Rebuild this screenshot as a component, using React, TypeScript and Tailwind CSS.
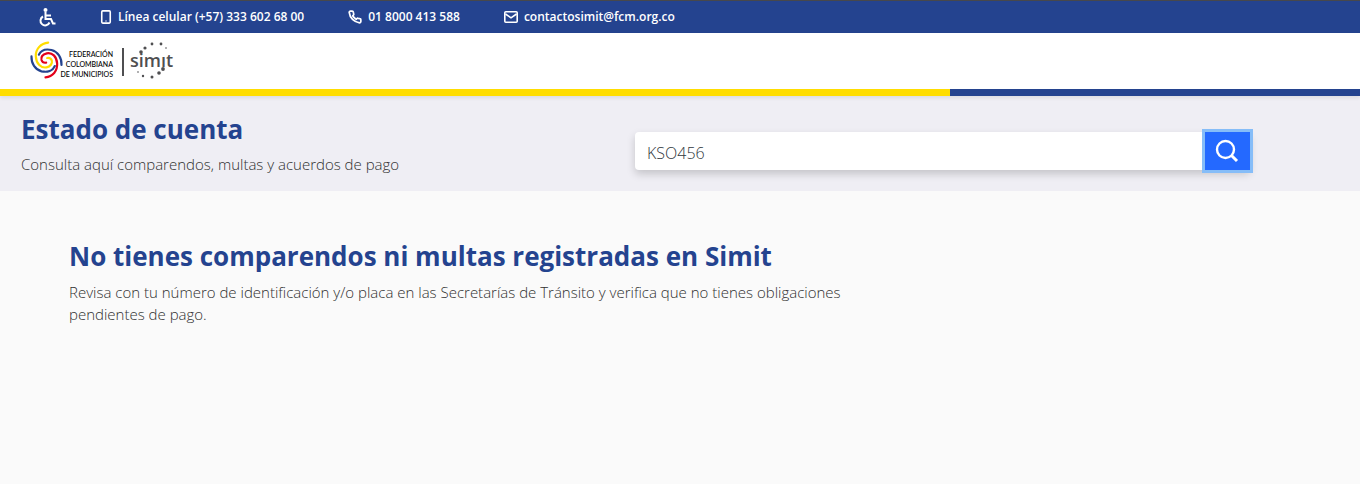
import { useState } from "react";

function FederationSwirl() {
  return (
    <svg viewBox="0 0 98 114" className="h-[38px] w-[33px] shrink-0" fill="none" strokeWidth="6.5" strokeLinecap="round" aria-hidden="true">
      <path stroke="#24438f" d="M4 46c-1 22 11 40 30 45 18 4 34-2 40-16" />
      <path stroke="#24438f" d="M94 72c1-22-11-40-30-45-18-4-32 2-38 14" />
      <path stroke="#ffdd00" d="M54 5C32 7 16 24 17 46c1 22 16 36 32 33 12-2 18-12 16-20-2-6-8-9-14-8" />
      <path stroke="#e2001a" d="M46 109C68 107 82 90 81 68 80 46 66 34 50 37 38 40 32 48 34 57c2 6 8 9 14 8" />
    </svg>
  );
}

function SimitLogo() {
  return (
    <svg viewBox="0 0 44 40" className="h-10 w-11 shrink-0" fill="#4f4f51" role="img" aria-label="simit">
      <text x="0" y="27" fontSize="18" fontWeight="600" fontFamily="'Open Sans', sans-serif">simıt</text>
      <circle cx="11" cy="12" r="1.8" />
      <circle cx="15" cy="8" r="1.6" />
      <circle cx="22" cy="4" r="1.4" />
      <circle cx="31" cy="4" r="1.4" />
      <circle cx="36" cy="8" r="0.8" />
      <circle cx="33" cy="29" r="1.9" />
      <circle cx="29" cy="33" r="1.8" />
      <circle cx="22" cy="37" r="1.5" />
      <circle cx="13" cy="36" r="1.2" />
      <circle cx="8" cy="32" r="0.8" />
    </svg>
  );
}

function AccessibilityIcon() {
  return (
    <svg viewBox="0 0 18 20" className="h-5 w-[18px]" fill="none" stroke="#fff" strokeWidth="2" aria-hidden="true">
      <circle cx="7.5" cy="3" r="2" fill="#fff" stroke="none" />
      <path d="M7.5 5v7h5.5l2 4.5h2.5M8 8.5h5" />
      <path d="M5 9.5a4.7 4.7 0 1 0 6.5 6" />
    </svg>
  );
}

function PhoneDeviceIcon() {
  return (
    <svg viewBox="0 0 12 14" className="h-3.5 w-3" fill="none" stroke="#fff" aria-hidden="true">
      <rect x="1.75" y="0.9" width="8.5" height="12.2" rx="1" strokeWidth="1.6" />
      <circle cx="6" cy="11" r="0.7" fill="#fff" stroke="none" />
    </svg>
  );
}

function HandsetIcon() {
  return (
    <svg viewBox="0 0 24 24" className="h-3.5 w-3.5" fill="none" stroke="#fff" strokeWidth="3" strokeLinejoin="round" aria-hidden="true">
      <path d="M22 16.9v3a2 2 0 0 1-2.2 2A19.8 19.8 0 0 1 2.1 4.2 2 2 0 0 1 4.1 2h3a2 2 0 0 1 2 1.7l.7 2.8a2 2 0 0 1-.5 2.1L8 9.9a16 16 0 0 0 6 6l1.3-1.3a2 2 0 0 1 2.1-.4l2.8.7a2 2 0 0 1 1.8 2z" />
    </svg>
  );
}

function MailIcon() {
  return (
    <svg viewBox="0 0 14 12" className="h-3 w-3.5" fill="none" stroke="#fff" strokeWidth="1.6" aria-hidden="true">
      <rect x="0.8" y="0.8" width="12.4" height="10.4" rx="1" />
      <path d="M1.5 3 7 6.8 12.5 3" />
    </svg>
  );
}

function SearchIcon() {
  return (
    <svg viewBox="0 0 24 24" className="size-6" fill="none" stroke="#fff" strokeWidth="2.4" aria-hidden="true">
      <circle cx="10.5" cy="10.5" r="8.5" />
      <path d="m16.5 16.5 5.5 5.5" strokeWidth="3" />
    </svg>
  );
}

export default function App() {
  const [query, setQuery] = useState("KSO456");

  return (
    <div className="min-h-screen bg-[#fafafa] font-['Open_Sans','Noto_Sans',sans-serif] text-[#303030]">
      <div className="flex h-[33px] items-center border-t border-[#47484c] bg-[#24438f] pb-px pl-[38px] text-[12px] font-semibold text-white">
        <button type="button" aria-label="Accesibilidad" className="mr-11">
          <AccessibilityIcon />
        </button>
        <nav aria-label="Contacto" className="flex items-center gap-11">
          <a href="tel:+573336026800" className="flex items-center gap-1.5"><PhoneDeviceIcon />Línea celular (+57) 333 602 68 00</a>
          <a href="tel:018000413588" className="flex items-center gap-1.5"><HandsetIcon />01 8000 413 588</a>
          <a href="mailto:contactosimit@fcm.org.co" className="flex items-center gap-1.5"><MailIcon />contactosimit@fcm.org.co</a>
        </nav>
      </div>

      <header className="relative bg-white shadow-[0_2px_4px_rgba(0,0,0,0.08)]">
        <a href="#inicio" className="flex h-14 w-fit items-center pb-0.5 pl-[30px]">
          <FederationSwirl />
          <span className="-ml-2.5 w-[60px] pt-2 text-right font-['Lato',sans-serif] text-[7px] leading-[10px] font-medium whitespace-nowrap text-black">
            FEDERACIÓN<br />COLOMBIANA<br />DE MUNICIPIOS
          </span>
          <span className="mt-1 mr-1.5 ml-[9px] h-7 w-0.5 bg-[#4f4f51]" />
          <SimitLogo />
        </a>
        <div className="flex h-[7px] bg-[#24438f]">
          <div className="w-[69.85%] bg-[#ffdd00]" />
        </div>
      </header>

      <section className="flex items-start bg-[#efeef4] pt-4 pb-4 pl-[21px]">
        <div className="w-[614px] shrink-0">
          <h1 className="text-[26px] leading-[34px] font-bold text-[#24438f]">Estado de cuenta</h1>
          <p className="mt-2 text-[15px] leading-[21px] font-light">Consulta aquí comparendos, multas y acuerdos de pago</p>
        </div>
        <form className="mt-5 mr-[110px] flex h-[38px] flex-1 rounded bg-white shadow-[0_4px_8px_rgba(0,0,0,0.18)]" onSubmit={(e) => e.preventDefault()}>
          <input
            aria-label="Número de identificación o placa"
            className="min-w-0 flex-1 rounded-l bg-transparent px-3 pt-1 text-[16px] font-light text-[#303840] outline-none"
            value={query}
            onChange={(e) => setQuery(e.target.value)}
          />
          <button type="submit" aria-label="Buscar" className="flex w-[45px] items-center justify-center bg-[#2469ff] pr-0.5 ring-[3px] ring-[#86bdf8]">
            <SearchIcon />
          </button>
        </form>
      </section>

      <main className="px-[69px] pt-12">
        <h2 className="text-[26px] leading-[34px] font-bold text-[#24438f]">No tienes comparendos ni multas registradas en Simit</h2>
        <p className="mt-2 max-w-[790px] text-[15px] leading-[22px] font-light">
          Revisa con tu número de identificación y/o placa en las Secretarías de Tránsito y verifica que no tienes obligaciones pendientes de pago.
        </p>
      </main>
    </div>
  );
}
